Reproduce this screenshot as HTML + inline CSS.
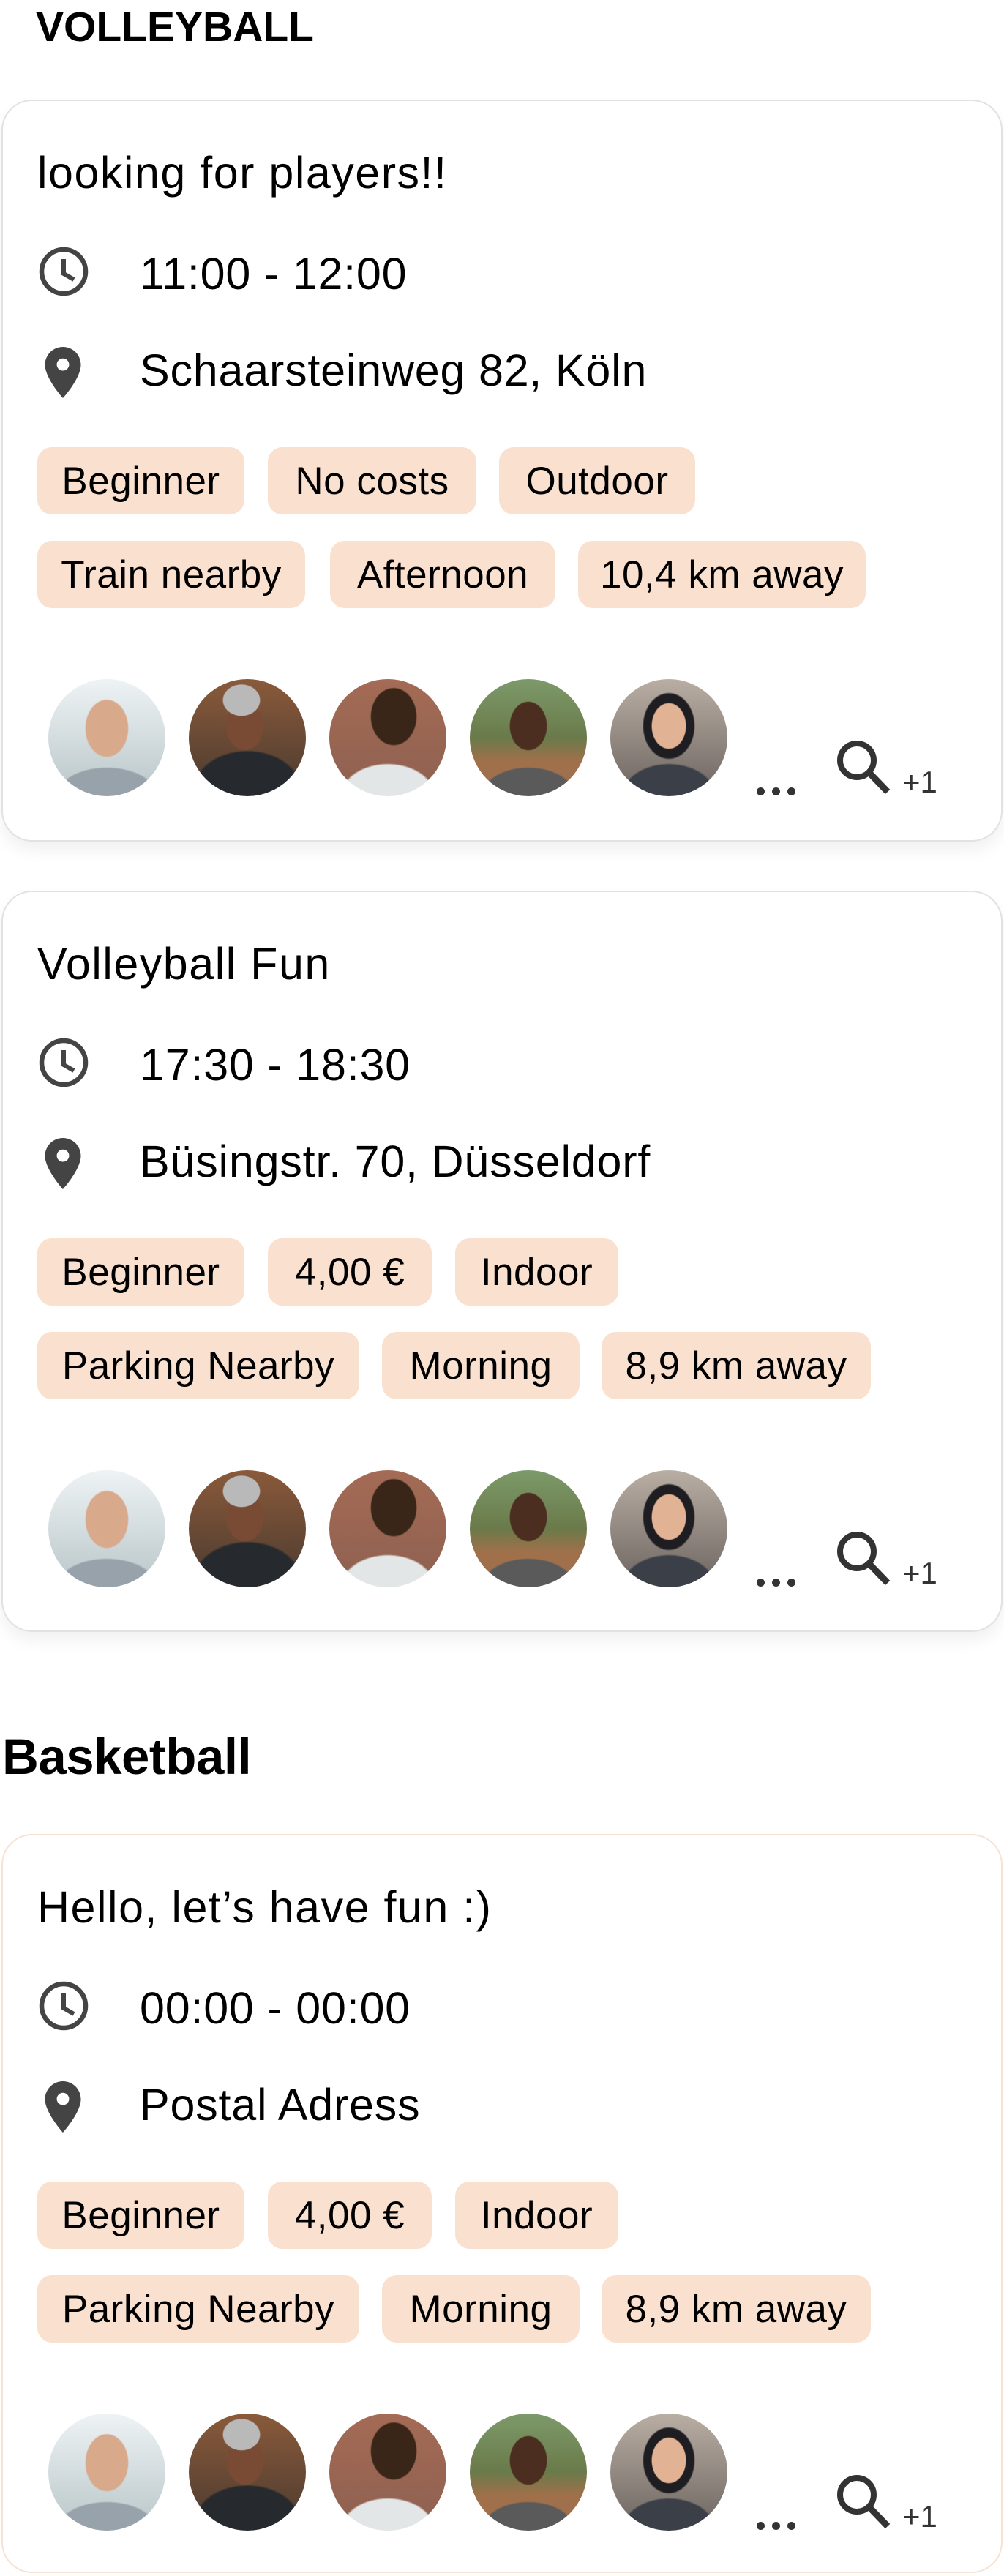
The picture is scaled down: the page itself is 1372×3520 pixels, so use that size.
<!DOCTYPE html>
<html><head><meta charset="utf-8">
<style>
*{margin:0;padding:0;box-sizing:border-box}
body{width:1372px;height:3520px;background:#fff;position:relative;overflow:hidden;font-family:"Liberation Sans",Arial,sans-serif;color:#000}
.h{position:absolute;font-weight:bold;line-height:1;white-space:nowrap}
.card{position:absolute;left:2px;width:1368px;border:2px solid #e2e2e2;border-radius:42px;background:#fff;box-shadow:0 12px 22px rgba(0,0,0,0.06)}
.card.peach{border-color:#f7e2d3;box-shadow:none}
.t{position:absolute;line-height:1;white-space:nowrap;font-size:61px;letter-spacing:0.8px}
.title{left:47px;top:68px;font-size:61px;letter-spacing:1.5px}
.time{left:187px;top:206px}
.addr{left:187px;top:338px}
.tag{position:absolute;height:92px;background:#fae0cf;border-radius:20px;font-size:53px;display:flex;align-items:center;justify-content:center;white-space:nowrap;letter-spacing:0.5px}
.av{position:absolute;top:790px;width:160px;height:160px;border-radius:50%;overflow:hidden}
.dot{position:absolute;width:11px;height:11px;border-radius:50%;background:#333;top:938px}
.plus{position:absolute;left:1229px;top:910px;font-size:42px;color:#333;line-height:1}
</style></head><body>

<div class="h" style="left:49px;top:9px;font-size:57px">VOLLEYBALL</div>
<div class="h" style="left:3px;top:2366px;font-size:69px;letter-spacing:-0.5px">Basketball</div>

<div class="card" style="top:136px;height:1014px">
 <div class="t title">looking for players!!</div>
 <svg style="position:absolute;left:46px;top:196px" width="74" height="74" viewBox="0 0 74 74"><circle cx="37" cy="37" r="30" fill="none" stroke="#444" stroke-width="6.5"/><path d="M37 20V40L51 48" fill="none" stroke="#444" stroke-width="6"/></svg>
 <div class="t time">11:00 - 12:00</div>
 <svg style="position:absolute;left:57px;top:336px" width="50" height="70" viewBox="5 2 14 20"><path d="M12 2C8.13 2 5 5.130 5 9c0 5.25 7 13 7 13s7-7.75 7-13c0-3.87-3.13-7-7-7zm0 9.3a2.4 2.4 0 010-4.8 2.4 2.4 0 010 4.8z" fill="#444"/></svg>
 <div class="t addr">Schaarsteinweg 82, Köln</div>
 <div class="tag" style="left:47px;top:473px;width:283px">Beginner</div>
 <div class="tag" style="left:362px;top:473px;width:285px">No costs</div>
 <div class="tag" style="left:678px;top:473px;width:268px">Outdoor</div>
 <div class="tag" style="left:47px;top:601px;width:366px">Train nearby</div>
 <div class="tag" style="left:447px;top:601px;width:308px">Afternoon</div>
 <div class="tag" style="left:786px;top:601px;width:393px">10,4 km away</div>
 <div class="av" style="left:62px;background:radial-gradient(ellipse 30px 40px at 50% 42%,#d9a98c 95%,transparent 100%),radial-gradient(ellipse 70px 40px at 50% 100%,#98a2ab 95%,transparent 100%),linear-gradient(#eef3f5,#b9c6c9)"></div>
 <div class="av" style="left:254px;background:radial-gradient(ellipse 26px 22px at 45% 18%,#b9b9b9 95%,transparent 100%),radial-gradient(ellipse 26px 34px at 48% 40%,#7a4b34 95%,transparent 100%),radial-gradient(ellipse 75px 55px at 50% 95%,#262a2e 95%,transparent 100%),linear-gradient(#8a5a3a,#4a3a30)"></div>
 <div class="av" style="left:446px;background:radial-gradient(ellipse 32px 40px at 55% 32%,#3a2618 95%,transparent 100%),radial-gradient(ellipse 65px 45px at 50% 100%,#e3e6e6 95%,transparent 100%),linear-gradient(#a46b55,#8e6050)"></div>
 <div class="av" style="left:638px;background:radial-gradient(ellipse 26px 34px at 50% 40%,#4b2e20 95%,transparent 100%),radial-gradient(ellipse 65px 40px at 50% 100%,#5a5a5a 95%,transparent 100%),linear-gradient(#7d9a6a 0,#6a7a4a 50%,#a0704a 70%,#a07050)"></div>
 <div class="av" style="left:830px;background:radial-gradient(ellipse 24px 32px at 50% 40%,#e2b294 95%,transparent 100%),radial-gradient(ellipse 36px 46px at 50% 40%,#1e1e22 95%,transparent 100%),radial-gradient(ellipse 65px 45px at 50% 100%,#3b4048 95%,transparent 100%),linear-gradient(#b9aea3,#6c6460)"></div>
 <div class="dot" style="left:1030px"></div><div class="dot" style="left:1051px"></div><div class="dot" style="left:1072px"></div>
 <svg style="position:absolute;left:1136px;top:870px" width="80" height="80" viewBox="0 0 80 80"><circle cx="31" cy="31" r="23" fill="none" stroke="#333" stroke-width="8"/><path d="M47 47L73 74" stroke="#333" stroke-width="9"/></svg>
 <div class="plus">+1</div>
</div>

<div class="card" style="top:1217px;height:1013px">
 <div class="t title">Volleyball Fun</div>
 <svg style="position:absolute;left:46px;top:196px" width="74" height="74" viewBox="0 0 74 74"><circle cx="37" cy="37" r="30" fill="none" stroke="#444" stroke-width="6.5"/><path d="M37 20V40L51 48" fill="none" stroke="#444" stroke-width="6"/></svg>
 <div class="t time">17:30 - 18:30</div>
 <svg style="position:absolute;left:57px;top:336px" width="50" height="70" viewBox="5 2 14 20"><path d="M12 2C8.13 2 5 5.13 5 9c0 5.25 7 13 7 13s7-7.75 7-13c0-3.87-3.13-7-7-7zm0 9.3a2.4 2.4 0 010-4.8 2.4 2.4 0 010 4.8z" fill="#444"/></svg>
 <div class="t addr">Büsingstr. 70, Düsseldorf</div>
 <div class="tag" style="left:47px;top:473px;width:283px">Beginner</div>
 <div class="tag" style="left:362px;top:473px;width:224px">4,00 €</div>
 <div class="tag" style="left:618px;top:473px;width:223px">Indoor</div>
 <div class="tag" style="left:47px;top:601px;width:440px">Parking Nearby</div>
 <div class="tag" style="left:518px;top:601px;width:270px">Morning</div>
 <div class="tag" style="left:818px;top:601px;width:368px">8,9 km away</div>
 <div class="av" style="left:62px;background:radial-gradient(ellipse 30px 40px at 50% 42%,#d9a98c 95%,transparent 100%),radial-gradient(ellipse 70px 40px at 50% 100%,#98a2ab 95%,transparent 100%),linear-gradient(#eef3f5,#b9c6c9)"></div>
 <div class="av" style="left:254px;background:radial-gradient(ellipse 26px 22px at 45% 18%,#b9b9b9 95%,transparent 100%),radial-gradient(ellipse 26px 34px at 48% 40%,#7a4b34 95%,transparent 100%),radial-gradient(ellipse 75px 55px at 50% 95%,#262a2e 95%,transparent 100%),linear-gradient(#8a5a3a,#4a3a30)"></div>
 <div class="av" style="left:446px;background:radial-gradient(ellipse 32px 40px at 55% 32%,#3a2618 95%,transparent 100%),radial-gradient(ellipse 65px 45px at 50% 100%,#e3e6e6 95%,transparent 100%),linear-gradient(#a46b55,#8e6050)"></div>
 <div class="av" style="left:638px;background:radial-gradient(ellipse 26px 34px at 50% 40%,#4b2e20 95%,transparent 100%),radial-gradient(ellipse 65px 40px at 50% 100%,#5a5a5a 95%,transparent 100%),linear-gradient(#7d9a6a 0,#6a7a4a 50%,#a0704a 70%,#a07050)"></div>
 <div class="av" style="left:830px;background:radial-gradient(ellipse 24px 32px at 50% 40%,#e2b294 95%,transparent 100%),radial-gradient(ellipse 36px 46px at 50% 40%,#1e1e22 95%,transparent 100%),radial-gradient(ellipse 65px 45px at 50% 100%,#3b4048 95%,transparent 100%),linear-gradient(#b9aea3,#6c6460)"></div>
 <div class="dot" style="left:1030px"></div><div class="dot" style="left:1051px"></div><div class="dot" style="left:1072px"></div>
 <svg style="position:absolute;left:1136px;top:870px" width="80" height="80" viewBox="0 0 80 80"><circle cx="31" cy="31" r="23" fill="none" stroke="#333" stroke-width="8"/><path d="M47 47L73 74" stroke="#333" stroke-width="9"/></svg>
 <div class="plus">+1</div>
</div>

<div class="card peach" style="top:2506px;height:1010px">
 <div class="t title">Hello, let’s have fun :)</div>
 <svg style="position:absolute;left:46px;top:196px" width="74" height="74" viewBox="0 0 74 74"><circle cx="37" cy="37" r="30" fill="none" stroke="#444" stroke-width="6.5"/><path d="M37 20V40L51 48" fill="none" stroke="#444" stroke-width="6"/></svg>
 <div class="t time">00:00 - 00:00</div>
 <svg style="position:absolute;left:57px;top:336px" width="50" height="70" viewBox="5 2 14 20"><path d="M12 2C8.13 2 5 5.13 5 9c0 5.25 7 13 7 13s7-7.75 7-13c0-3.87-3.13-7-7-7zm0 9.3a2.4 2.4 0 010-4.8 2.4 2.4 0 010 4.8z" fill="#444"/></svg>
 <div class="t addr">Postal Adress</div>
 <div class="tag" style="left:47px;top:473px;width:283px">Beginner</div>
 <div class="tag" style="left:362px;top:473px;width:224px">4,00 €</div>
 <div class="tag" style="left:618px;top:473px;width:223px">Indoor</div>
 <div class="tag" style="left:47px;top:601px;width:440px">Parking Nearby</div>
 <div class="tag" style="left:518px;top:601px;width:270px">Morning</div>
 <div class="tag" style="left:818px;top:601px;width:368px">8,9 km away</div>
 <div class="av" style="left:62px;background:radial-gradient(ellipse 30px 40px at 50% 42%,#d9a98c 95%,transparent 100%),radial-gradient(ellipse 70px 40px at 50% 100%,#98a2ab 95%,transparent 100%),linear-gradient(#eef3f5,#b9c6c9)"></div>
 <div class="av" style="left:254px;background:radial-gradient(ellipse 26px 22px at 45% 18%,#b9b9b9 95%,transparent 100%),radial-gradient(ellipse 26px 34px at 48% 40%,#7a4b34 95%,transparent 100%),radial-gradient(ellipse 75px 55px at 50% 95%,#262a2e 95%,transparent 100%),linear-gradient(#8a5a3a,#4a3a30)"></div>
 <div class="av" style="left:446px;background:radial-gradient(ellipse 32px 40px at 55% 32%,#3a2618 95%,transparent 100%),radial-gradient(ellipse 65px 45px at 50% 100%,#e3e6e6 95%,transparent 100%),linear-gradient(#a46b55,#8e6050)"></div>
 <div class="av" style="left:638px;background:radial-gradient(ellipse 26px 34px at 50% 40%,#4b2e20 95%,transparent 100%),radial-gradient(ellipse 65px 40px at 50% 100%,#5a5a5a 95%,transparent 100%),linear-gradient(#7d9a6a 0,#6a7a4a 50%,#a0704a 70%,#a07050)"></div>
 <div class="av" style="left:830px;background:radial-gradient(ellipse 24px 32px at 50% 40%,#e2b294 95%,transparent 100%),radial-gradient(ellipse 36px 46px at 50% 40%,#1e1e22 95%,transparent 100%),radial-gradient(ellipse 65px 45px at 50% 100%,#3b4048 95%,transparent 100%),linear-gradient(#b9aea3,#6c6460)"></div>
 <div class="dot" style="left:1030px"></div><div class="dot" style="left:1051px"></div><div class="dot" style="left:1072px"></div>
 <svg style="position:absolute;left:1136px;top:870px" width="80" height="80" viewBox="0 0 80 80"><circle cx="31" cy="31" r="23" fill="none" stroke="#333" stroke-width="8"/><path d="M47 47L73 74" stroke="#333" stroke-width="9"/></svg>
 <div class="plus">+1</div>
</div>

</body></html>
